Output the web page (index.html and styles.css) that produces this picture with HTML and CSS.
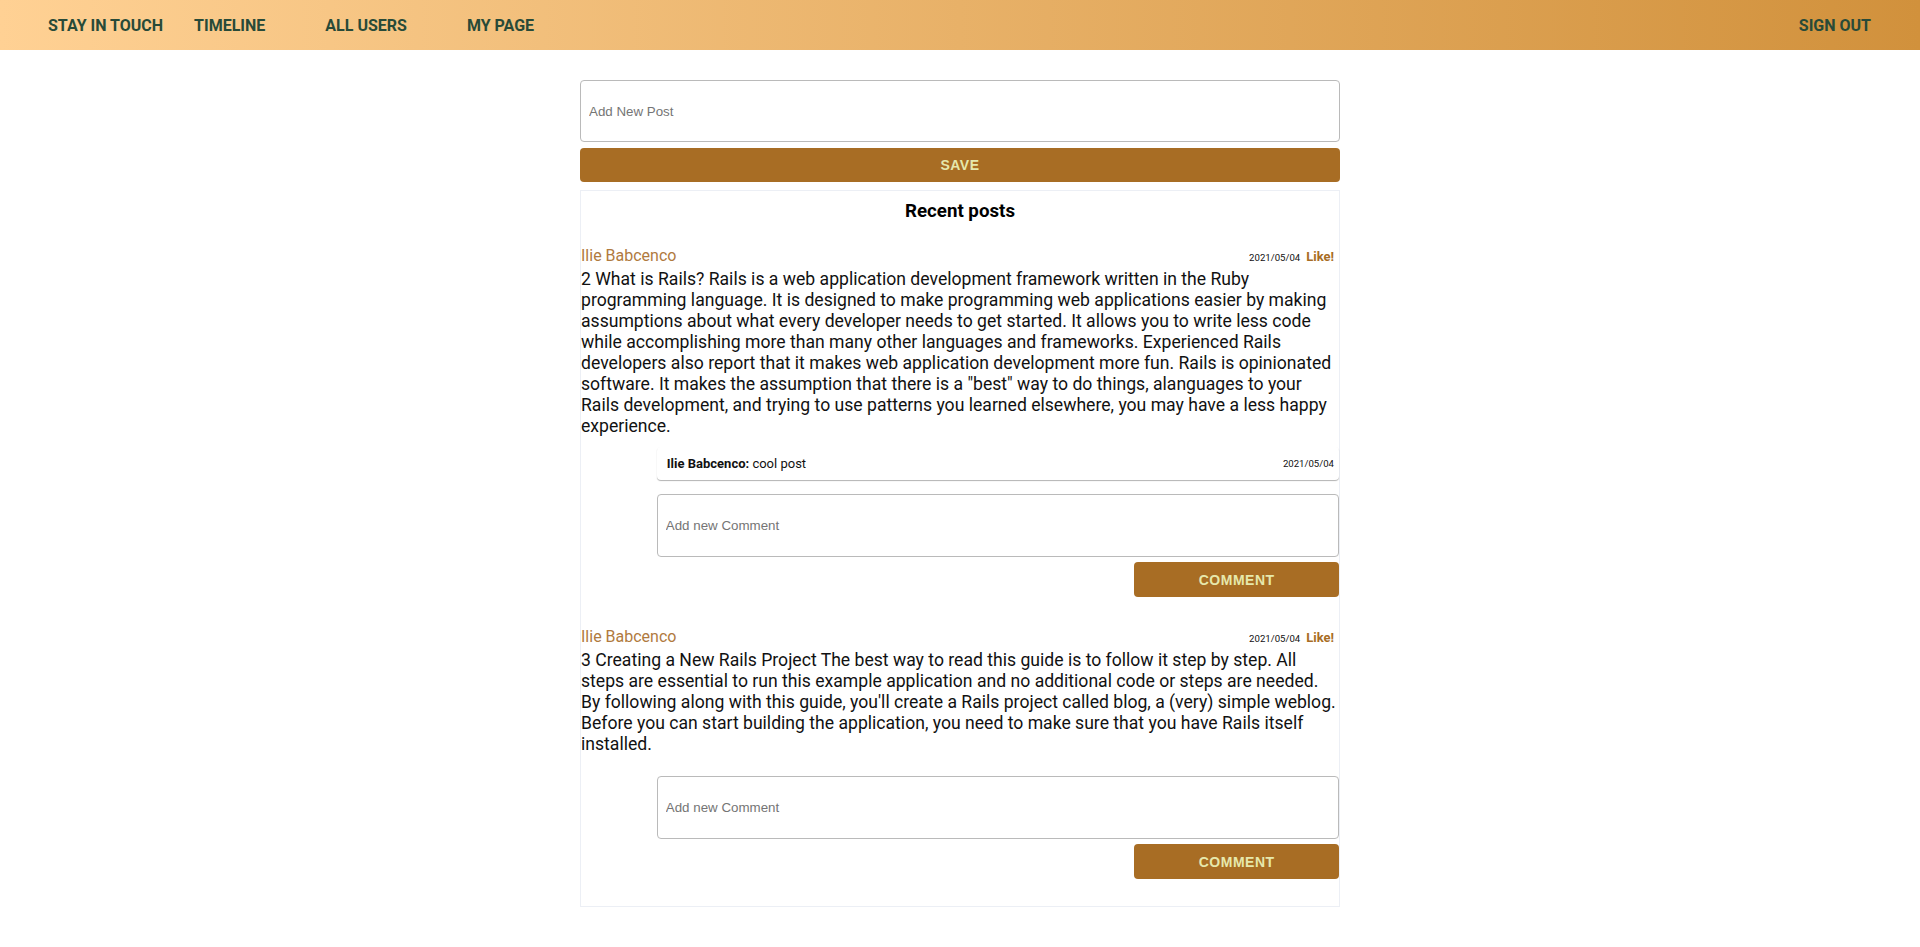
FILE: index.html
```html
<!DOCTYPE html>
<html lang="en">
<head>
<meta charset="utf-8">
<title>Stay in touch</title>
<link rel="stylesheet" href="styles.css">
</head>
<body>
<nav class="navbar">
  <a class="nav-link brand" href="#">STAY IN TOUCH</a>
  <div class="nav-links">
    <a class="nav-link" href="#">TIMELINE</a>
    <a class="nav-link" href="#">ALL USERS</a>
    <a class="nav-link" href="#">MY PAGE</a>
  </div>
  <a class="nav-link sign-out" href="#">SIGN OUT</a>
</nav>

<main class="main">
  <form class="post-form">
    <input class="field post-field" type="text" placeholder="Add New Post">
    <button class="btn save-btn" type="button">SAVE</button>
  </form>

  <section class="posts">
    <h3 class="posts-title">Recent posts</h3>

    <article class="post">
      <div class="post-header">
        <span class="author">Ilie Babcenco</span>
        <span class="post-meta">
          <span class="date">2021/05/04</span>
          <a class="like" href="#">Like!</a>
        </span>
      </div>
      <p class="post-body">2 What is Rails? Rails is a web application development framework written in the Ruby programming language. It is designed to make programming web applications easier by making assumptions about what every developer needs to get started. It allows you to write less code while accomplishing more than many other languages and frameworks. Experienced Rails developers also report that it makes web application development more fun. Rails is opinionated software. It makes the assumption that there is a "best" way to do things, alanguages to your Rails development, and trying to use patterns you learned elsewhere, you may have a less happy experience.</p>
      <ul class="comments">
        <li class="comment">
          <span class="comment-text"><strong>Ilie Babcenco:</strong> cool post</span>
          <span class="date">2021/05/04</span>
        </li>
      </ul>
      <form class="comment-form">
        <input class="field comment-field" type="text" placeholder="Add new Comment">
        <button class="btn comment-btn" type="button">COMMENT</button>
      </form>
    </article>

    <article class="post">
      <div class="post-header">
        <span class="author">Ilie Babcenco</span>
        <span class="post-meta">
          <span class="date">2021/05/04</span>
          <a class="like" href="#">Like!</a>
        </span>
      </div>
      <p class="post-body">3 Creating a New Rails Project The best way to read this guide is to follow it step by step. All steps are essential to run this example application and no additional code or steps are needed. By following along with this guide, you'll create a Rails project called blog, a (very) simple weblog. Before you can start building the application, you need to make sure that you have Rails itself installed.</p>
      <ul class="comments"></ul>
      <form class="comment-form">
        <input class="field comment-field" type="text" placeholder="Add new Comment">
        <button class="btn comment-btn" type="button">COMMENT</button>
      </form>
    </article>
  </section>
</main>
</body>
</html>
```

FILE: styles.css
```css
* {
  box-sizing: border-box;
}

body {
  margin: 0;
  font-family: Roboto, "Liberation Sans", sans-serif;
  color: #111;
  background: #fff;
}

.navbar {
  height: 50px;
  display: flex;
  align-items: center;
  padding: 0 49px 0 48px;
  background: linear-gradient(to right, #ffd194, #d1913c);
}

.nav-link {
  font-family: Roboto, sans-serif;
  font-weight: 700;
  font-size: 16px;
  color: #284a38;
  text-decoration: none;
}

.brand {
  margin-right: 31px;
}

.nav-links {
  display: flex;
  gap: 60px;
}

.sign-out {
  margin-left: auto;
}

.main {
  width: 760px;
  margin: 30px auto;
}

.post-form {
  display: flex;
  flex-direction: column;
  gap: 6px;
}

.field {
  display: block;
  width: 100%;
  border: 1px solid #bababa;
  border-radius: 4px;
  padding: 0 8px;
  font-family: "Liberation Sans", Arial, sans-serif;
  font-size: 13.333px;
  color: #111;
  background: #fff;
  outline: none;
}

.field::placeholder {
  color: #757575;
}

.post-field {
  height: 62px;
}

.btn {
  display: block;
  border: none;
  border-radius: 4px;
  background: #a86d24;
  color: #e6e8ac;
  font-family: "Liberation Sans", Arial, sans-serif;
  font-weight: 700;
  font-size: 14px;
  letter-spacing: 0.5px;
  cursor: pointer;
}

.save-btn {
  width: 100%;
  height: 34px;
}

.posts {
  margin-top: 8px;
  border: 1px solid #eceff5;
  padding-top: 9px;
}

.posts-title {
  margin: 0 0 24px;
  text-align: center;
  font-size: 18.72px;
  font-weight: 700;
  color: #000;
}

.post {
  display: flex;
  flex-direction: column;
  margin-bottom: 30px;
}

.post:last-child {
  margin-bottom: 27px;
}

.post-header {
  display: flex;
  align-items: baseline;
  justify-content: space-between;
  padding-right: 5px;
  margin-bottom: 4px;
}

.author {
  font-size: 16px;
  color: #b07a3e;
}

.post-meta {
  display: flex;
  align-items: baseline;
  gap: 6px;
}

.date {
  font-size: 9.6px;
  color: #111;
}

.like {
  font-size: 13px;
  font-weight: 700;
  color: #a86d24;
  text-decoration: none;
}

.post-body {
  margin: 0;
  font-size: 17.6px;
  line-height: 21px;
  color: #111;
}

.comments {
  list-style: none;
  margin: 7px 0 0 auto;
  padding: 0;
  width: 90%;
  display: flex;
  flex-direction: column;
}

.comment {
  margin-top: 3px;
  height: 33px;
  display: flex;
  align-items: center;
  justify-content: space-between;
  padding: 0 5px 0 10px;
  border-radius: 4px;
  box-shadow: 0 1px 1px rgba(0, 0, 0, 0.3);
  font-size: 13px;
}

.comment strong {
  font-weight: 700;
}

.comment-form {
  width: 90%;
  margin: 14px 0 0 auto;
  display: flex;
  flex-direction: column;
  gap: 5px;
}

.comment-field {
  height: 63px;
}

.comment-btn {
  width: 30%;
  height: 35px;
  margin-left: auto;
}
```
